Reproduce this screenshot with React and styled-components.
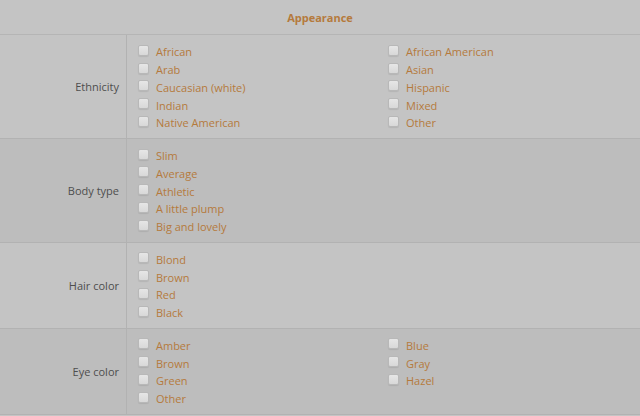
import styled, { createGlobalStyle } from "styled-components";

const GlobalStyle = createGlobalStyle`
  body {
    margin: 0;
    background: #c4c4c4;
    font-family: "Open Sans", "Liberation Sans", sans-serif;
  }
`;

const sections = [
  {
    label: "Ethnicity",
    columns: 2,
    options: ["African", "African American", "Arab", "Asian", "Caucasian (white)", "Hispanic", "Indian", "Mixed", "Native American", "Other"],
  },
  {
    label: "Body type",
    columns: 1,
    options: ["Slim", "Average", "Athletic", "A little plump", "Big and lovely"],
  },
  {
    label: "Hair color",
    columns: 1,
    options: ["Blond", "Brown", "Red", "Black"],
  },
  {
    label: "Eye color",
    columns: 2,
    options: ["Amber", "Blue", "Brown", "Gray", "Green", "Hazel", "Other"],
  },
];

const App = () => {
  return (
    <Wrapper>
      <GlobalStyle />
      <Header>Appearance</Header>
      {sections.map((s, i) => (
        <Section key={s.label} shade={i % 2 === 1}>
          <Label>{s.label}</Label>
          <Options columns={s.columns}>
            {s.options.map((o) => (
              <Option key={o}>
                <Box />
                <span>{o}</span>
              </Option>
            ))}
          </Options>
        </Section>
      ))}
    </Wrapper>
  );
};

const Wrapper = styled.div`
  width: 640px;
  font-size: 11px;
`;

const Header = styled.div`
  height: 34px;
  display: flex;
  align-items: center;
  justify-content: center;
  font-weight: 700;
  color: #b57a3c;
  background: #c4c4c4;
  border-bottom: 1px solid #b5b5b5;
`;

const Section = styled.div`
  display: grid;
  grid-template-columns: 127px 1fr;
  background: ${(props) => (props.shade ? "#bdbdbd" : "#c4c4c4")};
  border-bottom: 1px solid #b2b2b2;
`;

const Label = styled.div`
  display: flex;
  align-items: center;
  justify-content: flex-end;
  padding-right: 7px;
  color: #4e4e4e;
  border-right: 1px solid #b2b2b2;
`;

const Options = styled.div`
  display: grid;
  grid-template-columns: ${(props) => (props.columns === 2 ? "250px 1fr" : "1fr")};
  padding: 8px 0 6px 11px;
`;

const Option = styled.label`
  display: flex;
  align-items: center;
  gap: 7px;
  height: 17.75px;
  color: #b57a3c;
`;

const Box = styled.span`
  width: 9px;
  height: 9px;
  margin-top: -3px;
  border: 1px solid #b8b8b8;
  border-radius: 2px;
  background: linear-gradient(#e6e6e6, #d8d8d8);
  box-shadow: 0 1px 1px rgba(0, 0, 0, 0.08);
`;

export default App;
